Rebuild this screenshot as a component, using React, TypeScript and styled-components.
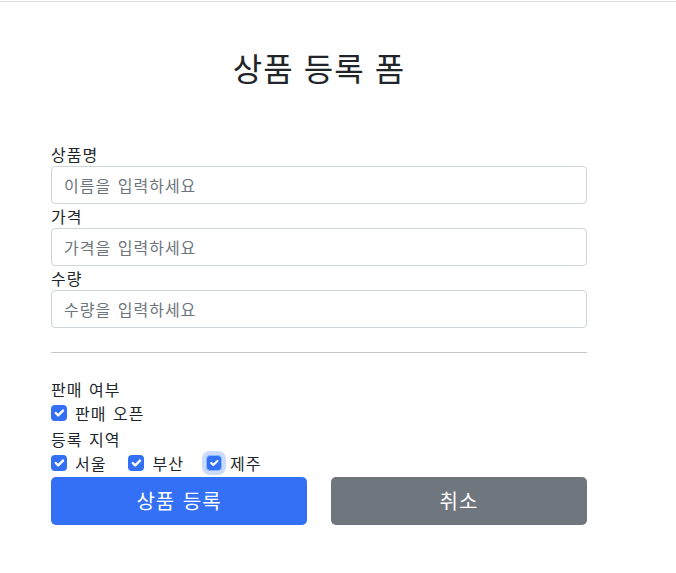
import React, { useState } from "react";
import styled, { createGlobalStyle, css } from "styled-components";

const GlobalStyle = createGlobalStyle`
  * { box-sizing: border-box; }
  html, body { margin: 0; padding: 0; background: #fff; }
  body {
    font-family: "Noto Sans CJK KR", "Noto Sans", sans-serif;
    font-size: 16px;
    line-height: 1.5;
    color: #212529;
    letter-spacing: 1px;
    word-spacing: 2px;
  }
`;

const TopRule = styled.div`
  height: 2px;
  border-bottom: 1px solid #dddddd;
`;

const Container = styled.div`
  width: 560px;
  margin-left: 39px;
  padding: 0 12px;
`;

const Header = styled.div`
  padding: 46px 0 48px;
  text-align: center;
`;

const Title = styled.h2`
  margin: 0 0 8px;
  font-size: 32px;
  font-weight: 400;
  line-height: 1.2;
  letter-spacing: 1px;
  word-spacing: 2px;
`;

const Form = styled.form`
  display: flex;
  flex-direction: column;
`;

const Label = styled.label`
  display: block;
  height: 24px;
`;

const Input = styled.input`
  display: block;
  width: 100%;
  height: 38px;
  padding: 6px 12px;
  font: inherit;
  letter-spacing: 1px;
  word-spacing: 2px;
  color: #212529;
  border: 1px solid #ced4da;
  border-radius: 4px;
  outline: none;
  &::placeholder { color: #6c757d; }
`;

const Divider = styled.hr`
  margin: 24px 0;
  border: 0;
  border-top: 1px solid #c8c9ca;
`;

const CheckRow = styled.div`
  display: flex;
  gap: 22px;
  height: 24px;
  margin-bottom: 2px;
`;

const CheckItem = styled.label`
  display: inline-flex;
  align-items: flex-start;
  gap: 8px;
  height: 24px;
`;

const Box = styled.span<{ $focus?: boolean }>`
  margin-top: 4px;
  width: 16px;
  height: 16px;
  border-radius: 4px;
  background: #3370f5;
  display: inline-flex;
  align-items: center;
  justify-content: center;
  flex-shrink: 0;
  ${(p) =>
    p.$focus &&
    css`
      box-shadow: 0 0 0 4px rgba(51, 112, 245, 0.25);
      border: 1px solid #86b7fe;
    `}
`;

const ButtonRow = styled.div`
  display: grid;
  grid-template-columns: 1fr 1fr;
  gap: 24px;
`;

const Button = styled.button<{ $variant: "primary" | "secondary" }>`
  height: 48px;
  font: inherit;
  font-size: 20px;
  letter-spacing: 1px;
  word-spacing: 2px;
  color: #fff;
  border: 0;
  border-radius: 5px;
  background: ${(p) => (p.$variant === "primary" ? "#3370f5" : "#6f767e")};
  cursor: pointer;
`;

const Check = ({ size }: { size: number }) => (
  <svg width={size} height={size} viewBox="0 0 20 20">
    <path d="M6 10l3 3l6-6" fill="none" stroke="#fff" strokeWidth="3" strokeLinecap="round" strokeLinejoin="round" />
  </svg>
);

const CheckBox = ({ label, focus }: { label: string; focus?: boolean }) => (
  <CheckItem>
    <Box $focus={focus}>
      <Check size={focus ? 14 : 16} />
    </Box>
    {label}
  </CheckItem>
);

export default function App() {
  const [name, setName] = useState("");
  const [price, setPrice] = useState("");
  const [qty, setQty] = useState("");
  return (
    <>
      <GlobalStyle />
      <TopRule />
      <Container>
        <Header>
          <Title>상품 등록 폼</Title>
        </Header>
        <Form onSubmit={(e) => e.preventDefault()}>
          <Label>상품명</Label>
          <Input placeholder="이름을 입력하세요" value={name} onChange={(e) => setName(e.target.value)} />
          <Label>가격</Label>
          <Input placeholder="가격을 입력하세요" value={price} onChange={(e) => setPrice(e.target.value)} />
          <Label>수량</Label>
          <Input placeholder="수량을 입력하세요" value={qty} onChange={(e) => setQty(e.target.value)} />
          <Divider />
          <Label as="div">판매 여부</Label>
          <CheckRow>
            <CheckBox label="판매 오픈" />
          </CheckRow>
          <Label as="div">등록 지역</Label>
          <CheckRow>
            <CheckBox label="서울" />
            <CheckBox label="부산" />
            <CheckBox label="제주" focus />
          </CheckRow>
          <ButtonRow>
            <Button $variant="primary" type="submit">상품 등록</Button>
            <Button $variant="secondary" type="button">취소</Button>
          </ButtonRow>
        </Form>
      </Container>
    </>
  );
}
